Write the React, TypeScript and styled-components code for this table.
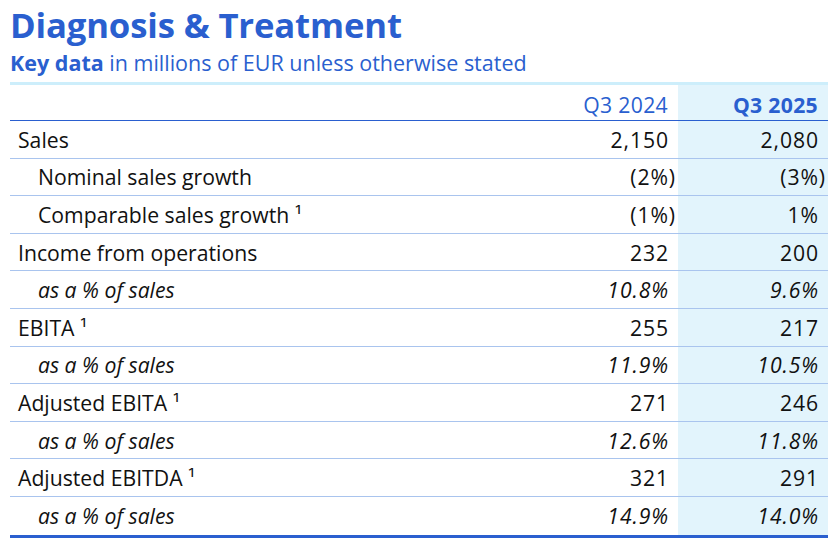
import React from "react";
import styled, { createGlobalStyle } from "styled-components";

const Global = createGlobalStyle`
  html, body { margin: 0; padding: 0; background: #ffffff; }
  body { font-family: "Open Sans", "Noto Sans", "Liberation Sans", sans-serif; }
`;

const Page = styled.div`
  width: 840px;
  height: 544px;
  box-sizing: border-box;
  padding: 2px 12px 0 10px;
  background: #fff;
`;

const Title = styled.h1`
  margin: 0;
  font-size: 34.7px;
  line-height: 46px;
  font-weight: 700;
  color: #2a5fcf;
  letter-spacing: -0.15px;
`;

const Subtitle = styled.div`
  font-size: 21.5px;
  line-height: 29px;
  color: #2a5fcf;
  margin-bottom: 5px;
  b { font-weight: 700; }
`;

const Table = styled.div`
  border-top: 3px solid #cdeefb;
  border-bottom: 3px solid #2a5fcf;
`;

const Row = styled.div<{ $header?: boolean }>`
  display: grid;
  grid-template-columns: 1fr 150px 150px;
  height: ${(p) => (p.$header ? "36px" : "37.6px")};
  box-sizing: border-box;
  border-bottom: ${(p) => (p.$header ? "1.5px solid #2a5fcf" : "1px solid #a9c4ee")};
  &:last-child { border-bottom: none; }
`;

const Label = styled.div<{ $indent?: boolean; $italic?: boolean }>`
  display: flex;
  align-items: center;
  padding-left: ${(p) => (p.$indent ? "28px" : "8px")};
  font-size: 21.2px;
  color: #111;
  font-style: ${(p) => (p.$italic ? "italic" : "normal")};
  white-space: nowrap;
`;

const Cell = styled.div<{ $hl?: boolean; $italic?: boolean; $head?: boolean; $bold?: boolean }>`
  display: flex;
  align-items: center;
  justify-content: flex-end;
  padding-right: ${(p) => (p.$head ? "10px" : "9px")};
  padding-top: ${(p) => (p.$head ? "4px" : "0")};
  font-size: 21.2px;
  letter-spacing: ${(p) => (p.$head ? "0.3px" : "0.9px")};
  white-space: nowrap;
  background: ${(p) => (p.$hl ? "#e2f4fc" : "transparent")};
  color: ${(p) => (p.$head ? "#2a5fcf" : "#111")};
  font-style: ${(p) => (p.$italic ? "italic" : "normal")};
  font-weight: ${(p) => (p.$bold ? 700 : 400)};
`;

const HangParen = styled.span`
  margin-right: -7px;
`;

type R = { label: string; sup?: boolean; indent?: boolean; italic?: boolean; a: string; b: string };

const rows: R[] = [
  { label: "Sales", a: "2,150", b: "2,080" },
  { label: "Nominal sales growth", indent: true, a: "(2%)", b: "(3%)" },
  { label: "Comparable sales growth", sup: true, indent: true, a: "(1%)", b: "1%" },
  { label: "Income from operations", a: "232", b: "200" },
  { label: "as a % of sales", indent: true, italic: true, a: "10.8%", b: "9.6%" },
  { label: "EBITA", sup: true, a: "255", b: "217" },
  { label: "as a % of sales", indent: true, italic: true, a: "11.9%", b: "10.5%" },
  { label: "Adjusted EBITA", sup: true, a: "271", b: "246" },
  { label: "as a % of sales", indent: true, italic: true, a: "12.6%", b: "11.8%" },
  { label: "Adjusted EBITDA", sup: true, a: "321", b: "291" },
  { label: "as a % of sales", indent: true, italic: true, a: "14.9%", b: "14.0%" },
];

function Value({ v }: { v: string }) {
  if (v.endsWith(")")) {
    return (
      <>
        {v.slice(0, -1)}
        <HangParen>)</HangParen>
      </>
    );
  }
  return <>{v}</>;
}

export default function App() {
  return (
    <Page>
      <Global />
      <Title>Diagnosis &amp; Treatment</Title>
      <Subtitle>
        <b>Key data</b> in millions of EUR unless otherwise stated
      </Subtitle>
      <Table>
        <Row $header>
          <Label />
          <Cell $head>Q3 2024</Cell>
          <Cell $head $hl $bold>Q3 2025</Cell>
        </Row>
        {rows.map((r, i) => (
          <Row key={i}>
            <Label $indent={r.indent} $italic={r.italic}>
              {r.sup ? `${r.label} ¹` : r.label}
            </Label>
            <Cell $italic={r.italic}><Value v={r.a} /></Cell>
            <Cell $hl $italic={r.italic}><Value v={r.b} /></Cell>
          </Row>
        ))}
      </Table>
    </Page>
  );
}
